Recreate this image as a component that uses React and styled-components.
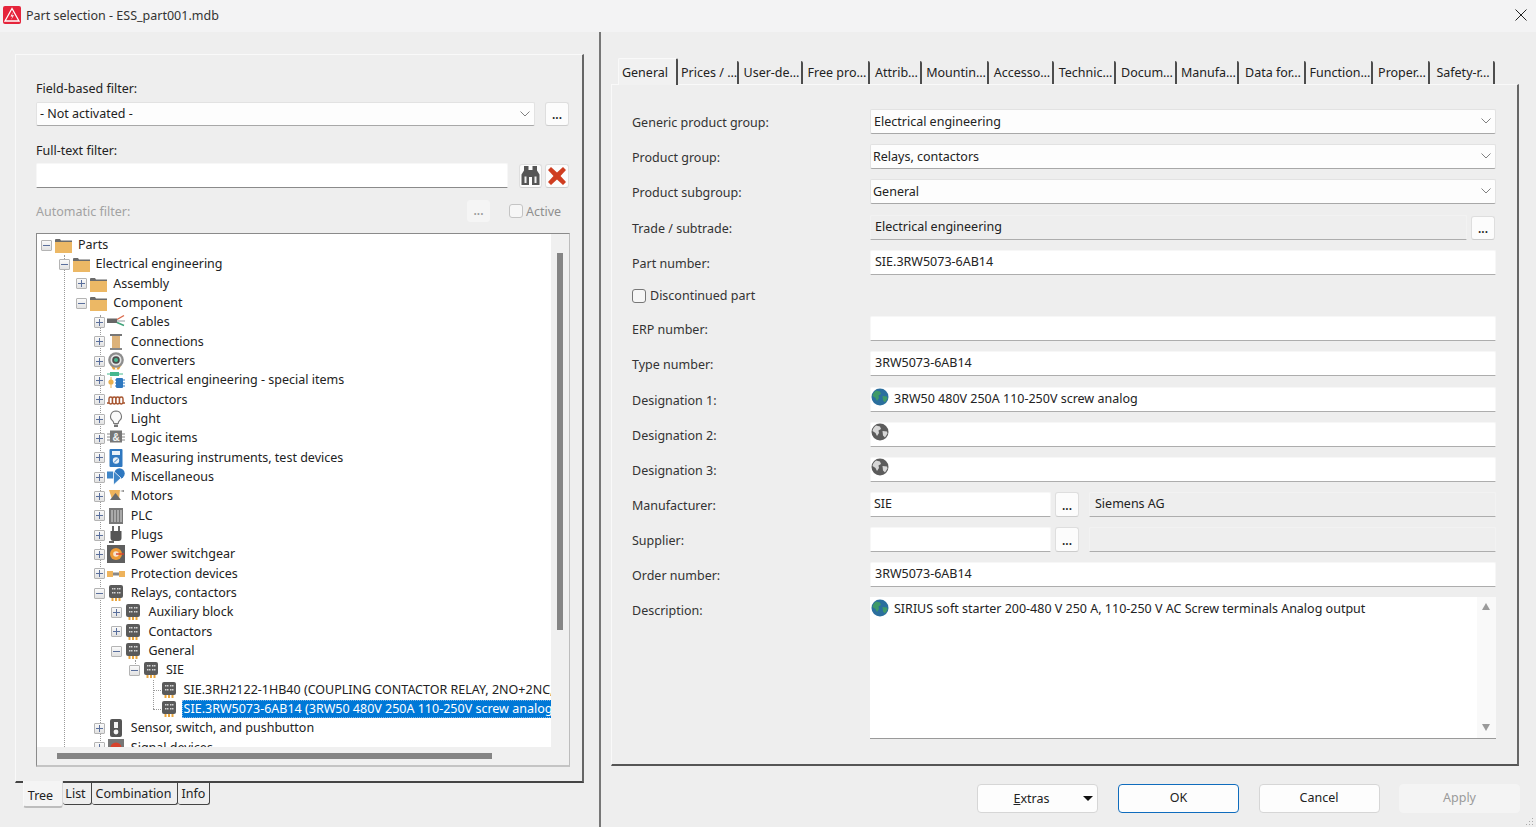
import React from "react";
import styled, { createGlobalStyle } from "styled-components";

const GlobalStyle = createGlobalStyle`
  html, body {
    margin: 0;
    padding: 0;
    background: #eeeeee;
  }
  * {
    box-sizing: border-box;
  }
`;

const Window = styled.div`
  position: relative;
  width: 1536px;
  height: 827px;
  overflow: hidden;
  display: flex;
  flex-direction: column;
  background: #eeeeee;
  color: #222;
  font-family: "Noto Sans", "Open Sans", sans-serif;
  font-size: 12.5px;
`;

const TitleBar = styled.div`
  height: 32px;
  flex-shrink: 0;
  display: flex;
  align-items: center;
  padding: 0 9px 2px 3px;
  background: #f3f3f4;
`;

const TitleText = styled.span`
  margin-left: 5px;
  flex: 1;
  color: #333;
`;

const Body = styled.div`
  flex: 1;
  display: flex;
  min-height: 0;
`;

const LeftPane = styled.div`
  width: 601px;
  flex-shrink: 0;
  padding: 22px 0 0 15px;
  border-right: 2px solid #777;
`;

const Card = styled.div`
  width: 569px;
  height: 729px;
  padding: 24px 0 0 20px;
  border-top: 1px solid #f9f9f9;
  border-left: 1px solid #f9f9f9;
  border-right: 2px solid #666;
  border-bottom: 2px solid #444;
`;

const FilterLabel = styled.div`
  height: 18px;
  line-height: 20px;
  margin-top: ${(p) => p.$top || 0}px;
  width: ${(p) => (p.$width ? `${p.$width}px` : "auto")};
  color: ${(p) => (p.$disabled ? "#a2a2a2" : "#222")};
`;

const FilterRow = styled.div`
  display: flex;
  align-items: center;
  margin-top: ${(p) => p.$top || 0}px;
  height: ${(p) => p.$height}px;
`;

const Combo = styled.div`
  display: flex;
  align-items: center;
  height: ${(p) => p.$height || 25}px;
  width: ${(p) => (p.$width ? `${p.$width}px` : "100%")};
  padding: 0 4px 1px ${(p) => p.$pad || 2}px;
  background: #fdfdfd;
  border: 1px solid #e2e2e2;
  border-bottom: 1px solid #a8a8a8;
  border-radius: 2px;
  justify-content: space-between;
`;

const Field = styled.div`
  display: flex;
  align-items: center;
  height: 25px;
  width: ${(p) => (p.$width ? `${p.$width}px` : "100%")};
  margin-left: ${(p) => p.$left || 0}px;
  padding: 0 0 3px ${(p) => p.$pad ?? 4}px;
  background: ${(p) => (p.$readOnly ? "#eeeeee" : "#ffffff")};
  border: 1px solid ${(p) => (p.$readOnly ? "#f2f2f2" : "#f7f7f7")};
  border-bottom: 1px solid ${(p) => (p.$dark ? "#8a8a8a" : "#adadad")};
  border-radius: 2px 2px 0 0;
  white-space: nowrap;
`;

const DotButton = styled.div`
  width: ${(p) => p.$width || 24}px;
  height: ${(p) => p.$height || 24}px;
  flex-shrink: 0;
  margin-left: ${(p) => p.$left || 0}px;
  display: flex;
  align-items: flex-end;
  justify-content: center;
  padding-bottom: 3px;
  font-size: 12px;
  font-weight: 600;
  line-height: 14px;
  color: ${(p) => (p.$disabled ? "#9a9a9a" : "#222")};
  background: ${(p) => (p.$disabled ? "#f5f5f5" : "#fcfcfc")};
  border: 1px solid ${(p) => (p.$disabled ? "#f5f5f5" : "#dedede")};
  border-bottom-color: ${(p) => (p.$disabled ? "#f5f5f5" : "#cccccc")};
  border-radius: 3px;
`;

const ImageButton = styled(DotButton)`
  align-items: center;
  padding: 0;
`;

const Check = styled.span`
  width: 14px;
  height: 14px;
  flex-shrink: 0;
  display: inline-block;
  margin-left: ${(p) => p.$left || 0}px;
  background: #f6f6f6;
  border: 1px solid ${(p) => (p.$disabled ? "#c4c4c4" : "#777")};
  border-radius: 3px;
`;

const ActiveLabel = styled.span`
  width: 37px;
  margin-left: 3px;
  color: #8f8f8f;
  white-space: nowrap;
`;

const TreeBox = styled.div`
  display: grid;
  grid-template-columns: 1fr 18px;
  grid-template-rows: 1fr 18px;
  width: 534px;
  height: 534px;
  margin-top: 11px;
  border-top: 1px solid #8a8a8a;
  border-left: 1px solid #8a8a8a;
  border-right: 1px solid #bdbdbd;
  border-bottom: 2px solid #c4c4c4;
`;

const TreeView = styled.div`
  position: relative;
  background: #fff;
  overflow: hidden;
  padding-top: 1.5px;
`;

const Guide = styled.div`
  position: absolute;
  left: ${(p) => p.$x}px;
  top: ${(p) => p.$y}px;
  width: ${(p) => p.$w || 1}px;
  height: ${(p) => p.$h || 1}px;
  border-left: ${(p) => (p.$h ? "1px dotted #9a9a9a" : "none")};
  border-top: ${(p) => (p.$w ? "1px dotted #9a9a9a" : "none")};
`;

const TreeRow = styled.div`
  position: relative;
  display: flex;
  align-items: center;
  height: 19.33px;
  padding-left: ${(p) => 4 + p.$level * 17.6}px;
  white-space: nowrap;
`;

const Expander = styled.span`
  position: relative;
  width: 11px;
  height: 11px;
  flex-shrink: 0;
  background: ${(p) => (p.$kind ? "linear-gradient(#fafafa, #e2e2e2)" : "transparent")};
  border: ${(p) => (p.$kind ? "1px solid #b4b4b4" : "none")};
  border-radius: 1px;
  &::before {
    content: "";
    display: ${(p) => (p.$kind ? "block" : "none")};
    position: absolute;
    left: 1px;
    right: 1px;
    top: 4px;
    height: 1px;
    background: #5a6f9c;
  }
  &::after {
    content: "";
    display: ${(p) => (p.$kind === "+" ? "block" : "none")};
    position: absolute;
    top: 1px;
    bottom: 1px;
    left: 4px;
    width: 1px;
    background: #5a6f9c;
  }
`;

const IconSvg = styled.svg`
  width: 18px;
  height: 18px;
  flex-shrink: 0;
  margin-left: 2px;
`;

const RowText = styled.span`
  margin-left: 4px;
  padding: 0 1px 1px 2px;
  height: 18px;
  line-height: 17px;
  ${(p) =>
    p.$selected &&
    `
    flex: 1;
    background: #0078d7;
    color: #fff;
    outline: 1px dotted #7fb4e4;
    outline-offset: -1px;
  `}
`;

const VTrack = styled.div`
  background: #f0f0f0;
  padding: 19px 0 0 6px;
`;

const VThumb = styled.div`
  width: 6px;
  height: 377px;
  background: #858585;
`;

const HTrack = styled.div`
  background: #f0f0f0;
  padding: 6px 0 0 20px;
`;

const HThumb = styled.div`
  width: 435px;
  height: 6px;
  background: #858585;
`;

const Corner = styled.div`
  background: #f0f0f0;
`;

const BottomTabs = styled.div`
  display: flex;
  align-items: flex-start;
  padding-left: 8px;
  margin-top: -2px;
  position: relative;
`;

const BottomTab = styled.div`
  width: ${(p) => p.$width}px;
  height: ${(p) => (p.$active ? 27 : 22)}px;
  margin-top: ${(p) => (p.$active ? 0 : 2)}px;
  padding-right: ${(p) => p.$shift || 0}px;
  text-align: center;
  line-height: ${(p) => (p.$active ? 29 : 22)}px;
  background: ${(p) => (p.$active ? "#f4f4f4" : "#eeeeee")};
  border-right: 1px solid ${(p) => (p.$active ? "#d8d8d8" : "#444")};
  border-bottom: ${(p) => (p.$active ? "2px solid #bdbdbd" : "1px solid #444")};
  border-left: ${(p) => (p.$active ? "1px solid #f8f8f8" : "none")};
  border-radius: 0 0 3px 3px;
`;

const RightPane = styled.div`
  flex: 1;
  display: flex;
  flex-direction: column;
  padding: 25px 0 0 10px;
  min-width: 0;
`;

const TabRow = styled.div`
  display: flex;
  align-items: flex-end;
  height: 27px;
  padding-left: 7px;
  position: relative;
`;

const TopTab = styled.div`
  width: ${(p) => p.$width}px;
  height: ${(p) => (p.$active ? 27 : 23)}px;
  flex-shrink: 0;
  text-align: center;
  padding: ${(p) => (p.$active ? "0 5px 0 0" : "0 0 0 3px")};
  line-height: ${(p) => (p.$active ? 27 : 23)}px;
  background: ${(p) => (p.$active ? "#f1f1f1" : "transparent")};
  border-right: 2px solid #4d4d4d;
  border-top: ${(p) => (p.$active ? "1px solid #f9f9f9" : "none")};
  border-left: ${(p) => (p.$active ? "1px solid #f9f9f9" : "none")};
  border-radius: 2px 2px 0 0;
  margin-bottom: ${(p) => (p.$active ? -1 : 0)}px;
  position: relative;
  white-space: nowrap;
`;

const Panel = styled.div`
  width: 908px;
  height: 682px;
  padding: 24px 21px 0 20px;
  border-top: 1px solid #f9f9f9;
  border-left: 1px solid #f9f9f9;
  border-right: 2px solid #666;
  border-bottom: 2px solid #555;
`;

const FormRow = styled.div`
  display: grid;
  grid-template-columns: 238px 1fr;
  align-items: ${(p) => (p.$top ? "start" : "center")};
  margin-bottom: ${(p) => p.$gap ?? 10}px;
  min-height: ${(p) => p.$height || 25}px;
`;

const FormLabel = styled.div`
  color: #333;
  line-height: 18px;
  padding-top: ${(p) => (p.$top ? 5 : 2)}px;
`;

const Inline = styled.div`
  display: flex;
  align-items: center;
`;

const CheckLabel = styled.label`
  display: flex;
  align-items: center;
  gap: 4px;
  color: #333;
`;

const TextArea = styled.div`
  display: grid;
  grid-template-columns: 1fr 19px;
  height: 142px;
  background: #fff;
  border-bottom: 1px solid #9a9a9a;
`;

const AreaText = styled.div`
  display: flex;
  align-items: center;
  align-self: start;
  padding: 2px 0 0 1px;
  white-space: nowrap;
`;

const AreaScroll = styled.div`
  display: flex;
  flex-direction: column;
  justify-content: space-between;
  align-items: center;
  padding: 6px 2px 7px 0;
  background: #f9f9f9;
`;

const Arrow = styled.span`
  width: 0;
  height: 0;
  border-left: 4px solid transparent;
  border-right: 4px solid transparent;
  border-${(p) => (p.$up ? "bottom" : "top")}: 7px solid #9a9a9a;
`;

const GlobeSvg = styled.svg`
  width: 18px;
  height: 18px;
  flex-shrink: 0;
  margin-right: 5px;
  margin-bottom: ${(p) => (p.$lift ? 3 : 0)}px;
`;

const ButtonBar = styled.div`
  display: flex;
  justify-content: flex-end;
  gap: 19.5px;
  padding: 18px 16px 0 0;
`;

const DialogButton = styled.div`
  width: 121px;
  height: 29px;
  display: flex;
  align-items: center;
  justify-content: center;
  padding-bottom: 2px;
  color: ${(p) => (p.$disabled ? "#9a9a9a" : "#222")};
  background: ${(p) => (p.$disabled ? "#f4f4f4" : "#fdfdfd")};
  border: 1px solid ${(p) => (p.$primary ? "#0f6cbd" : p.$disabled ? "#f4f4f4" : "#d6d6d6")};
  border-radius: 4px;
`;

const ExtrasButton = styled(DialogButton)`
  justify-content: flex-start;
  margin-right: 1px;
  padding: 0 4px 0 36px;
`;

const ExtrasCaret = styled.span`
  width: 0;
  height: 0;
  margin-left: auto;
  border-left: 5px solid transparent;
  border-right: 5px solid transparent;
  border-top: 5px solid #111;
`;

const Grip = styled.svg`
  position: absolute;
  right: 2px;
  bottom: 2px;
`;

const Folder = () => (
  <>
    <path d="M1 5V3.600L2 3h4l1 1.400h11V6H1z" fill="#6b6b6b" />
    <rect x="1" y="6" width="17" height="11" fill="#ecb865" />
  </>
);

const RelayBody = () => (
  <>
    <path d="M4.500 12h2v5h-2zM8 12h2v5H8zM11.500 12h2v5h-2z" fill="#e9a53c" />
    <rect x="2" y="1" width="14" height="13" rx="2" fill="#5a5a5a" />
    <path
      d="M5 4h1.500v1.500H5zM7 4h1.500v1.500H7zM10 4h1.500v1.500H10zM12 4h1.500v1.500H12zM5 8h1.500v1.500H5zM7 8h1.500v1.500H7zM10 8h1.500v1.500H10zM12 8h1.500v1.500H12z"
      fill="#d4d4d4"
    />
  </>
);

const ICONS = {
  folder: <Folder />,
  relay: <RelayBody />,
  cables: (
    <>
      <rect x="0" y="5.500" width="10" height="4.500" fill="#666" />
      <path d="M10 6.500l7-4" stroke="#d9694a" strokeWidth="1.400" />
      <path d="M10 8h8" stroke="#b0b8bc" strokeWidth="1.400" />
      <path d="M10 9.500l7 3" stroke="#3fa37a" strokeWidth="1.400" />
    </>
  ),
  spool: (
    <>
      <rect x="3" y="1" width="12" height="2" fill="#777" />
      <rect x="5" y="3" width="8" height="12" fill="#dcb27a" />
      <rect x="3" y="15" width="12" height="2" fill="#888" />
    </>
  ),
  converter: (
    <>
      <path d="M3 12l3 5.500h2.500l-2-5.500zM15 12l-3 5.500H9.500l2-5.500z" fill="#e9a53c" />
      <circle cx="9" cy="8" r="7.800" fill="#8d8d8d" />
      <circle cx="9" cy="8" r="5.500" fill="#e4e4e4" />
      <circle cx="9" cy="8" r="3.800" fill="#4d4d4d" />
      <circle cx="9" cy="8" r="2" fill="#46b88e" />
    </>
  ),
  special: (
    <>
      <rect x="3" y="1" width="9" height="4" fill="#46b88e" />
      <path d="M0 3h16" stroke="#46b88e" strokeWidth="1" />
      <circle cx="4" cy="11" r="2.600" fill="#e9b050" />
      <path d="M4 6v11" stroke="#e9b050" strokeWidth="1" />
      <rect x="9" y="7" width="7" height="10" rx="1" fill="#2f78c0" />
      <path d="M8 9h10M8 12h10M8 15h10" stroke="#2f78c0" strokeWidth="1" />
    </>
  ),
  inductor: (
    <>
      <path d="M0 12h2M16 12h2" stroke="#a5522c" strokeWidth="1.500" />
      <rect x="2" y="6" width="3.500" height="7" rx="1.700" fill="#fff" stroke="#a5522c" strokeWidth="1.400" />
      <rect x="5.500" y="6" width="3.500" height="7" rx="1.700" fill="#fff" stroke="#a5522c" strokeWidth="1.400" />
      <rect x="9" y="6" width="3.500" height="7" rx="1.700" fill="#fff" stroke="#a5522c" strokeWidth="1.400" />
      <rect x="12.500" y="6" width="3.500" height="7" rx="1.700" fill="#fff" stroke="#a5522c" strokeWidth="1.400" />
    </>
  ),
  bulb: (
    <>
      <path
        d="M9 1a5.500 5.500 0 0 0-3.500 9.700c.8.8 1.300 1.800 1.300 2.800h4.400c0-1 .5-2 1.300-2.800A5.500 5.500 0 0 0 9 1z"
        fill="#fafafa"
        stroke="#777"
        strokeWidth="1.100"
      />
      <rect x="7" y="14.500" width="4" height="2.500" fill="#777" />
    </>
  ),
  logic: (
    <>
      <path d="M0 5h3M0 8h3M0 11h3M15 5h3M15 8h3M15 11h3" stroke="#888" strokeWidth="1" />
      <rect x="3" y="1.500" width="12" height="12" fill="#777" />
      <text x="9" y="11.500" fontSize="10" fontWeight="700" textAnchor="middle" fill="#f2f2f2" fontFamily="Liberation Sans, sans-serif">
        &amp;
      </text>
    </>
  ),
  meter: (
    <>
      <rect x="2.500" y="0" width="13" height="18" rx="1" fill="#2f78c0" />
      <rect x="5" y="2" width="8" height="4" fill="#e8f0f8" />
      <circle cx="9" cy="11.500" r="3.200" fill="#e8f0f8" />
      <path d="M7 13.500l4-4" stroke="#2f78c0" strokeWidth="1" />
    </>
  ),
  misc: (
    <>
      <circle cx="12.500" cy="5.500" r="5.200" fill="#2f78c0" />
      <rect x="0" y="3.500" width="7" height="7" fill="#3f86c8" />
      <path d="M6.500 3v14l7.500-7z" fill="#3f86c8" stroke="#fff" strokeWidth=".8" />
    </>
  ),
  motor: (
    <>
      <path d="M2 3h11l-1 9H5z" fill="#eeb35c" />
      <path d="M13 4l4-1v2z" fill="#888" />
      <path d="M8.500 6L14 13H3z" fill="#6a6a6a" />
    </>
  ),
  plc: (
    <>
      <rect x="2" y="1" width="14" height="16" fill="#777" />
      <path d="M5 3v12M8 3v12M11 3v12M14 3v12" stroke="#ddd" strokeWidth="1" />
    </>
  ),
  plug: (
    <>
      <path d="M6 0v5M12 0v5" stroke="#666" strokeWidth="2" />
      <path d="M3.500 5h11v7a3 3 0 0 1-3 3h-5a3 3 0 0 1-3-3z" fill="#555" />
      <path d="M7 15H2v2h5z" fill="#666" />
    </>
  ),
  power: (
    <>
      <rect x="0" y="0" width="18" height="18" fill="#5f5f5f" />
      <circle cx="9" cy="9" r="6" fill="#ee9a35" />
      <circle cx="9" cy="9" r="2.800" fill="#f7e3d0" />
      <path d="M9 9h8" stroke="#d8432c" strokeWidth="1.400" />
    </>
  ),
  protection: (
    <>
      <rect x="0" y="6" width="6" height="6" fill="#eeb35c" />
      <rect x="12" y="6" width="6" height="6" fill="#eeb35c" />
      <rect x="6" y="7.500" width="6" height="3" fill="#888" />
    </>
  ),
  sensor: (
    <>
      <rect x="3" y="0" width="12" height="18" rx="2" fill="#555" />
      <rect x="7" y="3" width="4" height="6" fill="#f4f4f4" />
      <circle cx="9" cy="13" r="2.400" fill="#f4f4f4" />
    </>
  ),
  signal: (
    <>
      <rect x="1" y="0" width="16" height="18" fill="#777" />
      <circle cx="9" cy="9" r="5.500" fill="#d8432c" />
    </>
  ),
};

const TREE = [
  [0, "-", "folder", "Parts"],
  [1, "-", "folder", "Electrical engineering"],
  [2, "+", "folder", "Assembly"],
  [2, "-", "folder", "Component"],
  [3, "+", "cables", "Cables"],
  [3, "+", "spool", "Connections"],
  [3, "+", "converter", "Converters"],
  [3, "+", "special", "Electrical engineering - special items"],
  [3, "+", "inductor", "Inductors"],
  [3, "+", "bulb", "Light"],
  [3, "+", "logic", "Logic items"],
  [3, "+", "meter", "Measuring instruments, test devices"],
  [3, "+", "misc", "Miscellaneous"],
  [3, "+", "motor", "Motors"],
  [3, "+", "plc", "PLC"],
  [3, "+", "plug", "Plugs"],
  [3, "+", "power", "Power switchgear"],
  [3, "+", "protection", "Protection devices"],
  [3, "-", "relay", "Relays, contactors"],
  [4, "+", "relay", "Auxiliary block"],
  [4, "+", "relay", "Contactors"],
  [4, "-", "relay", "General"],
  [5, "-", "relay", "SIE"],
  [6, null, "relay", "SIE.3RH2122-1HB40 (COUPLING CONTACTOR RELAY,  2NO+2NC, 24V DC)"],
  [6, null, "relay", "SIE.3RW5073-6AB14 (3RW50 480V 250A 110-250V screw analog output)", true],
  [3, "+", "sensor", "Sensor, switch, and pushbutton"],
  [3, "+", "signal", "Signal devices"],
];

const TOP_TABS = [
  ["General", 60],
  ["Prices / …", 61],
  ["User-de…", 64],
  ["Free pro…", 67],
  ["Attrib…", 52],
  ["Mountin…", 67],
  ["Accesso…", 65],
  ["Technic…", 62],
  ["Docum…", 61],
  ["Manufa…", 62],
  ["Data for…", 67],
  ["Function…", 67],
  ["Proper…", 57],
  ["Safety-r…", 65],
];

const Chevron = () => (
  <svg width="10" height="6" viewBox="0 0 10 6">
    <path d="M.5.5L5 5 9.500.5" fill="none" stroke="#808080" strokeWidth="1" />
  </svg>
);

const Globe = ({ gray, lift }) => (
  <GlobeSvg $lift={lift} viewBox="0 0 18 18">
    <circle cx="9" cy="9" r="8.500" fill={gray ? "#5c5c5c" : "#2b6f9e"} />
    <path
      d="M5 2.500l4 1 1 2.500-2.500 1.500L8 10l-2 3-1.500-3L1.500 8C2 5.500 3 4 5 2.500zM11.500 8l4.500.5.500 2-2.500 4-2-2z"
      fill={gray ? "#d8d8d8" : "#3f9a68"}
    />
  </GlobeSvg>
);

const Row = ({ label, children, gap, top }) => (
  <FormRow $gap={gap} $top={top}>
    <FormLabel $top={top}>{label}</FormLabel>
    {children}
  </FormRow>
);

export default function App() {
  return (
    <Window>
      <GlobalStyle />
      <TitleBar>
        <svg width="18" height="18" viewBox="0 0 18 18">
          <rect width="18" height="18" rx="2" fill="#e5243b" />
          <path d="M9 2.500L16 15H2z" fill="none" stroke="#fff" strokeWidth="1.300" />
          <path d="M10 6L7.500 10.500h2L8 14l3-4.700H9z" fill="#fff" />
        </svg>
        <TitleText>Part selection - ESS_part001.mdb</TitleText>
        <svg width="12" height="12" viewBox="0 0 12 12">
          <path d="M.5.5l11 11M11.500.5l-11 11" stroke="#222" strokeWidth="1" />
        </svg>
      </TitleBar>
      <Body>
        <LeftPane>
          <Card>
            <FilterLabel>Field-based filter:</FilterLabel>
            <FilterRow $top={5} $height={24}>
              <Combo $width={499} $height={24} $pad={3}>
                - Not activated -
                <Chevron />
              </Combo>
              <DotButton $left={10}>...</DotButton>
            </FilterRow>
            <FilterLabel $top={15}>Full-text filter:</FilterLabel>
            <FilterRow $top={4} $height={25}>
              <Field $width={472} $dark />
              <ImageButton $left={11} $width={23}>
                <svg width="21" height="21" viewBox="0 0 21 21">
                  <path
                    d="M4 1h4.500v4h4V1H17v4.500l2.500 4V20h-7.500v-8H9v8H1.500V9.500L4 5.500z"
                    fill="#555"
                  />
                  <path d="M4.500 11.500h2v6.500h-2zM14.500 11.500h2v6.500h-2z" fill="#eee" />
                </svg>
              </ImageButton>
              <ImageButton $left={3}>
                <svg width="20" height="20" viewBox="0 0 20 20">
                  <path
                    d="M4 1l6 5.500L16 1l3 3-5.500 6 5.500 6-3 3-6-5.500L4 19l-3-3 5.500-6L1 4z"
                    fill="#cf3d20"
                  />
                </svg>
              </ImageButton>
            </FilterRow>
            <FilterRow $top={12} $height={22}>
              <FilterLabel $disabled $width={431}>
                Automatic filter:
              </FilterLabel>
              <DotButton $width={23} $height={22} $disabled>
                ...
              </DotButton>
              <Check $disabled $left={19} />
              <ActiveLabel>Active</ActiveLabel>
            </FilterRow>
            <TreeBox>
              <TreeView>
                <Guide $x={27} $y={21} $h={500} />
                <Guide $x={63} $y={81} $h={440} />
                <Guide $x={116} $y={446} $h={29} />
                <Guide $x={116} $y={456} $w={8} />
                <Guide $x={116} $y={475} $w={8} />
                <Guide $x={98} $y={426} $h={10} />
                {TREE.map(([level, kind, icon, text, selected]) => (
                  <TreeRow key={text} $level={level}>
                    <Expander $kind={kind} />
                    <IconSvg viewBox="0 0 18 18">{ICONS[icon]}</IconSvg>
                    <RowText $selected={selected}>{text}</RowText>
                  </TreeRow>
                ))}
              </TreeView>
              <VTrack>
                <VThumb />
              </VTrack>
              <HTrack>
                <HThumb />
              </HTrack>
              <Corner />
            </TreeBox>
          </Card>
          <BottomTabs>
            <BottomTab $active $width={40} $shift={5}>
              Tree
            </BottomTab>
            <BottomTab $width={29} $shift={3}>
              List
            </BottomTab>
            <BottomTab $width={86} $shift={2}>
              Combination
            </BottomTab>
            <BottomTab $width={32}>Info</BottomTab>
          </BottomTabs>
        </LeftPane>
        <RightPane>
          <TabRow>
            {TOP_TABS.map(([name, width], i) => (
              <TopTab key={name} $width={width} $active={i === 0}>
                {name}
              </TopTab>
            ))}
          </TabRow>
          <Panel>
            <Row label="Generic product group:">
              <Combo $height={25} $pad={3}>
                Electrical engineering
                <Chevron />
              </Combo>
            </Row>
            <Row label="Product group:">
              <Combo $height={25}>
                Relays, contactors
                <Chevron />
              </Combo>
            </Row>
            <Row label="Product subgroup:" gap={11}>
              <Combo $height={25}>
                General
                <Chevron />
              </Combo>
            </Row>
            <Row label="Trade / subtrade:">
              <Inline>
                <Field $readOnly $width={597}>
                  Electrical engineering
                </Field>
                <DotButton $left={4}>...</DotButton>
              </Inline>
            </Row>
            <Row label="Part number:">
              <Field>SIE.3RW5073-6AB14</Field>
            </Row>
            <FormRow $height={21}>
              <CheckLabel>
                <Check />
                Discontinued part
              </CheckLabel>
            </FormRow>
            <Row label="ERP number:">
              <Field />
            </Row>
            <Row label="Type number:" gap={11}>
              <Field>3RW5073-6AB14</Field>
            </Row>
            <Row label="Designation 1:">
              <Field $pad={0}>
                <Globe lift />
                3RW50 480V 250A 110-250V screw analog
              </Field>
            </Row>
            <Row label="Designation 2:">
              <Field $pad={0}>
                <Globe gray lift />
              </Field>
            </Row>
            <Row label="Designation 3:">
              <Field $pad={0}>
                <Globe gray lift />
              </Field>
            </Row>
            <Row label="Manufacturer:">
              <Inline>
                <Field $width={181} $pad={3}>
                  SIE
                </Field>
                <DotButton $left={4} $height={25}>
                  ...
                </DotButton>
                <Field $readOnly $width={407} $left={10} $pad={5}>
                  Siemens AG
                </Field>
              </Inline>
            </Row>
            <Row label="Supplier:">
              <Inline>
                <Field $width={181} />
                <DotButton $left={4} $height={25}>
                  ...
                </DotButton>
                <Field $readOnly $width={407} $left={10} />
              </Inline>
            </Row>
            <Row label="Order number:">
              <Field>3RW5073-6AB14</Field>
            </Row>
            <Row label="Description:" top gap={0}>
              <TextArea>
                <AreaText>
                  <Globe />
                  SIRIUS soft starter 200-480 V 250 A, 110-250 V AC Screw terminals Analog output
                </AreaText>
                <AreaScroll>
                  <Arrow $up />
                  <Arrow />
                </AreaScroll>
              </TextArea>
            </Row>
          </Panel>
          <ButtonBar>
            <ExtrasButton>
              <span>
                <u>E</u>xtras
              </span>
              <ExtrasCaret />
            </ExtrasButton>
            <DialogButton $primary>OK</DialogButton>
            <DialogButton>Cancel</DialogButton>
            <DialogButton $disabled>Apply</DialogButton>
          </ButtonBar>
        </RightPane>
      </Body>
      <Grip width="8" height="8" viewBox="0 0 8 8">
        <path d="M6 1h1v1H6zM3 4h1v1H3zM6 4h1v1H6zM0 7h1v1H0zM3 7h1v1H3zM6 7h1v1H6z" fill="#aaa" />
      </Grip>
    </Window>
  );
}
